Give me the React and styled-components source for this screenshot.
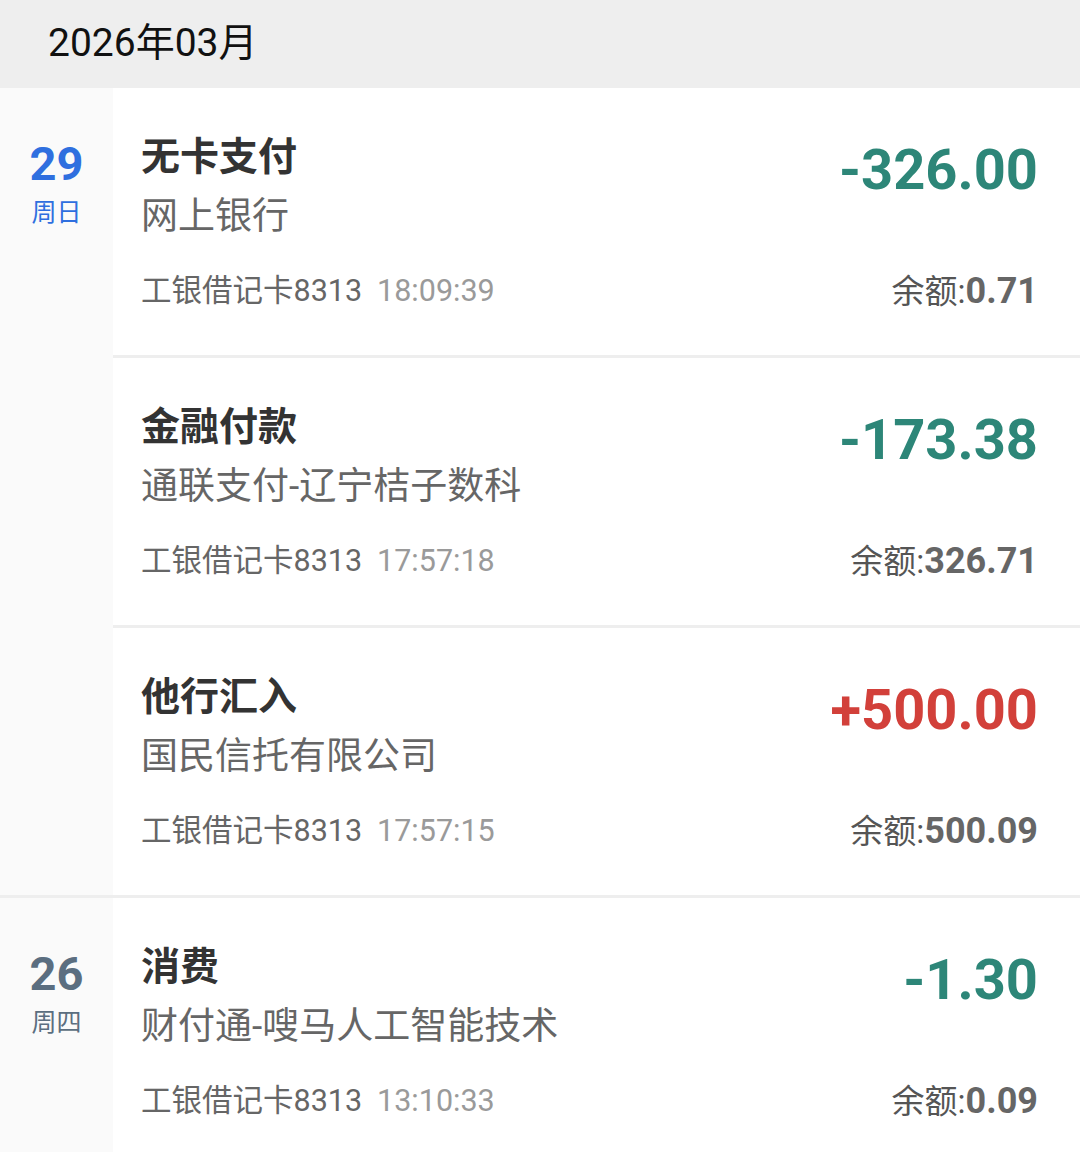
import React from "react";
import styled, { createGlobalStyle } from "styled-components";

const GlobalStyle = createGlobalStyle`
  body {
    margin: 0;
    background: #ffffff;
    font-family: Roboto, "Noto Sans CJK SC", sans-serif;
  }
`;

const groups = [
  {
    day: "29",
    week: "周日",
    today: true,
    items: [
      { title: "无卡支付", sub: "网上银行", card: "工银借记卡8313", time: "18:09:39", amount: "-326.00", balance: "0.71" },
      { title: "金融付款", sub: "通联支付-辽宁桔子数科", card: "工银借记卡8313", time: "17:57:18", amount: "-173.38", balance: "326.71" },
      { title: "他行汇入", sub: "国民信托有限公司", card: "工银借记卡8313", time: "17:57:15", amount: "+500.00", balance: "500.09" },
    ],
  },
  {
    day: "26",
    week: "周四",
    today: false,
    items: [
      { title: "消费", sub: "财付通-嗖马人工智能技术", card: "工银借记卡8313", time: "13:10:33", amount: "-1.30", balance: "0.09" },
    ],
  },
];

const App = () => {
  return (
    <>
      <GlobalStyle />
      <Page>
        <MonthBar>2026年03月</MonthBar>
        {groups.map(group => (
          <DayGroup key={group.day}>
            <DateCol>
              <DayNum active={group.today}>{group.day}</DayNum>
              <WeekDay active={group.today}>{group.week}</WeekDay>
            </DateCol>
            <RowList>
              {group.items.map(item => (
                <Row key={item.time}>
                  <Title>{item.title}</Title>
                  <Sub>{item.sub}</Sub>
                  <Meta>
                    {item.card}
                    <Time>{item.time}</Time>
                  </Meta>
                  <Amount income={item.amount.startsWith("+")}>{item.amount}</Amount>
                  <Balance>
                    余额:<b>{item.balance}</b>
                  </Balance>
                </Row>
              ))}
            </RowList>
          </DayGroup>
        ))}
      </Page>
    </>
  );
};

const Page = styled.div`
  width: 1080px;
  overflow: hidden;
`;

const MonthBar = styled.div`
  height: 88px;
  background: #eeeeee;
  display: flex;
  align-items: center;
  padding: 0 0 10px 48px;
  font-size: 39px;
  color: #111111;
  box-sizing: border-box;
`;

const DayGroup = styled.div`
  display: flex;
  border-bottom: 3px solid #eeeeee;
`;

const DateCol = styled.div`
  width: 113px;
  flex-shrink: 0;
  background: #fafafa;
  padding-top: 48px;
  text-align: center;
  display: flex;
  flex-direction: column;
  align-items: center;
`;

const DayNum = styled.div`
  font-size: 47px;
  line-height: 56px;
  font-weight: 700;
  color: ${props => (props.active ? "#2f6fdf" : "#5b6e80")};
`;

const WeekDay = styled.div`
  font-size: 25px;
  line-height: 41px;
  color: ${props => (props.active ? "#2f6fdf" : "#5b6e80")};
`;

const RowList = styled.div`
  flex: 1;
  display: flex;
  flex-direction: column;
`;

const Row = styled.div`
  box-sizing: border-box;
  padding: 44px 42px 0 28px;
  display: grid;
  grid-template-columns: 1fr auto;
  grid-template-rows: 50px 70px 78px;
  grid-template-areas:
    "title amount"
    "sub amount"
    "meta balance";
  border-bottom: 3px solid #eeeeee;
  height: 270px;

  &:last-child {
    border-bottom: none;
    height: 267px;
  }
`;

const Title = styled.div`
  grid-area: title;
  font-size: 39px;
  line-height: 50px;
  font-weight: 700;
  color: #333333;
`;

const Sub = styled.div`
  grid-area: sub;
  font-size: 37px;
  line-height: 70px;
  color: #666666;
`;

const Meta = styled.div`
  grid-area: meta;
  font-size: 30.5px;
  line-height: 78px;
  color: #666666;
`;

const Time = styled.span`
  margin-left: 15px;
  color: #9a9a9a;
`;

const Amount = styled.div`
  grid-area: amount;
  align-self: start;
  justify-self: end;
  margin-top: 3px;
  font-size: 56px;
  line-height: 70px;
  font-weight: 700;
  color: ${props => (props.income ? "#d2403a" : "#2d8678")};
`;

const Balance = styled.div`
  grid-area: balance;
  justify-self: end;
  font-size: 33px;
  line-height: 78px;
  color: #555555;

  b {
    font-size: 36px;
    font-weight: 700;
    color: #666666;
  }
`;

export default App;
